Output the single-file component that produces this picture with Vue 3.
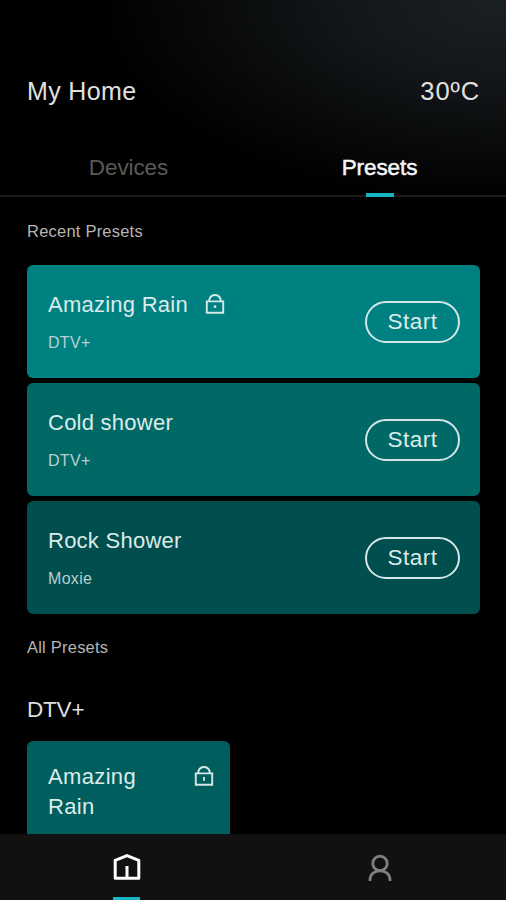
<script setup>
const recent = [
  { name: 'Amazing Rain', device: 'DTV+', locked: true, tone: 'bright' },
  { name: 'Cold shower', device: 'DTV+', locked: false, tone: 'medium' },
  { name: 'Rock Shower', device: 'Moxie', locked: false, tone: 'deep' },
]
</script>

<template>
  <div class="screen">
    <main class="content">
      <header class="top">
        <h1>My Home</h1>
        <span class="temp">30ºC</span>
      </header>
      <nav class="tabs">
        <a class="tab">Devices</a>
        <a class="tab active">Presets</a>
      </nav>

      <h2 class="label">Recent Presets</h2>
      <section class="recent">
        <article v-for="p in recent" :key="p.name" class="card" :class="p.tone">
          <div class="info">
            <div class="title">
              <span>{{ p.name }}</span>
              <svg v-if="p.locked" class="lock" viewBox="0 0 20 22">
                <path d="M1.8 8.4H18.2V19.8H1.8ZM4 8.4L4.4 6.4C5.2 3.8 7.4 2 10 2S14.8 3.8 15.6 6.4L16 8.4" />
                <circle cx="10" cy="13.7" r="1.4" />
              </svg>
            </div>
            <div class="device">{{ p.device }}</div>
          </div>
          <button class="start">Start</button>
        </article>
      </section>

      <h2 class="label all">All Presets</h2>
      <h3 class="group">DTV+</h3>
      <article class="tile">
        <span class="tile-name">Amazing Rain</span>
        <svg class="lock" viewBox="0 0 20 22">
          <path d="M1.8 8.4H18.2V19.8H1.8ZM4 8.4L4.4 6.4C5.2 3.8 7.4 2 10 2S14.8 3.8 15.6 6.4L16 8.4" />
          <path class="key" d="M10 12V15.8" />
        </svg>
      </article>
    </main>

    <nav class="bottom">
      <a class="item current">
        <svg class="home" viewBox="0 0 28 28">
          <path d="M2.2 7.4L14 2.6L25.8 7.4V25.2H2.2ZM14 13V25" />
        </svg>
      </a>
      <a class="item">
        <svg class="person" viewBox="0 0 24 28">
          <circle cx="12" cy="9.4" r="7.2" />
          <path d="M2 27V26C2 20.5 6.2 16.8 12 16.8S22 20.5 22 26V27" />
        </svg>
      </a>
    </nav>
  </div>
</template>

<style>
body {
  background: #000;
  overflow: hidden;
}
</style>

<style scoped>
.screen {
  box-sizing: border-box;
  width: 506px;
  height: 900px;
  display: flex;
  flex-direction: column;
  overflow: hidden;
  font-family: "Liberation Sans", Arial, sans-serif;
  color: #e0e0e0;
  background:
    radial-gradient(ellipse 410px 205px at 100% 0, #1b2023 0%, #14171a 38%, #0a0c0d 66%, #000 100%) no-repeat #000;
}
h1, h2, h3 {
  margin: 0;
  font-weight: 400;
}
.content {
  flex: 1;
  min-height: 0;
  overflow: hidden;
}
.top {
  display: flex;
  justify-content: space-between;
  padding: 76px 26px 0 27px;
  line-height: 30px;
}
h1 {
  font-size: 25px;
  letter-spacing: 0.35px;
}
.temp {
  font-size: 25.5px;
  letter-spacing: 0.9px;
}
.tabs {
  display: grid;
  grid-template-columns: 1fr 1fr;
  height: 63px;
  margin-top: 26px;
  border-bottom: 2px solid #1c1c1c;
}
.tab {
  position: relative;
  padding-top: 20px;
  padding-left: 4px;
  line-height: 31px;
  text-align: center;
  font-size: 22.5px;
  letter-spacing: -0.1px;
  color: #595959;
}
.tab.active {
  padding-left: 0;
  color: #f6f6f6;
  -webkit-text-stroke: 0.5px #f6f6f6;
}
.tab.active::after {
  content: "";
  position: absolute;
  left: 50%;
  bottom: -2px;
  width: 28px;
  height: 4px;
  margin-left: -14px;
  background: #18b6c4;
}
.label {
  height: 26px;
  padding: 22px 27px 0;
  line-height: 25px;
  font-size: 16.5px;
  letter-spacing: 0.22px;
  color: #b5b5b5;
}
.recent {
  display: grid;
  gap: 5px;
  padding: 20px 26px 0 27px;
}
.card {
  box-sizing: border-box;
  height: 113px;
  display: flex;
  justify-content: space-between;
  align-items: center;
  padding: 0 20px 0 21px;
  border-radius: 6px;
}
.bright { background: #008181; }
.medium { background: #006966; }
.deep { background: #004e4e; }
.info {
  padding-top: 2px;
}
.title {
  display: flex;
  align-items: center;
  gap: 17px;
  line-height: 30px;
  font-size: 22px;
  letter-spacing: 0.25px;
  color: #dcebea;
}
.lock {
  width: 20px;
  height: 22px;
  flex: none;
  fill: none;
  stroke: #d4e8e6;
  stroke-width: 1.9;
}
.title .lock {
  margin-top: -2px;
}
.lock circle {
  fill: #d4e8e6;
  stroke: none;
}
.device {
  margin-top: 11px;
  line-height: 24px;
  font-size: 16px;
  letter-spacing: 0.3px;
  color: #b7d0d0;
}
.start {
  box-sizing: border-box;
  width: 95px;
  height: 42px;
  padding: 0;
  border: 2px solid #d4e6e5;
  border-radius: 21px;
  background: none;
  font: 22.5px/36px "Liberation Sans", Arial, sans-serif;
  letter-spacing: 0.5px;
  color: #dcebea;
}
.all {
  padding-top: 21px;
}
.group {
  padding: 34px 27px 0;
  line-height: 30px;
  font-size: 22.5px;
  letter-spacing: -0.2px;
  color: #dedede;
}
.tile {
  box-sizing: border-box;
  width: 203px;
  height: 113px;
  display: flex;
  justify-content: space-between;
  margin: 16px 0 0 27px;
  padding: 21px 16px 0 21px;
  border-radius: 6px;
  background: #005f5e;
}
.tile-name {
  width: 100px;
  line-height: 30px;
  font-size: 22px;
  letter-spacing: 0.35px;
  color: #dcebea;
}
.tile .lock {
  margin-top: 3px;
}
.bottom {
  flex: none;
  height: 66px;
  display: flex;
  background: #111;
}
.item {
  position: relative;
  flex: 1;
  display: flex;
  justify-content: center;
  align-items: flex-start;
}
.current::after {
  content: "";
  position: absolute;
  left: 50%;
  bottom: 0;
  width: 27px;
  height: 3px;
  margin-left: -13.5px;
  background: #18b6c4;
}
.home {
  width: 28px;
  height: 28px;
  margin-top: 19px;
  fill: none;
  stroke: #fff;
  stroke-width: 3;
  stroke-linejoin: round;
}
.person {
  width: 24px;
  height: 28px;
  margin-top: 20px;
  fill: none;
  stroke: #808080;
  stroke-width: 2.8;
}
</style>
